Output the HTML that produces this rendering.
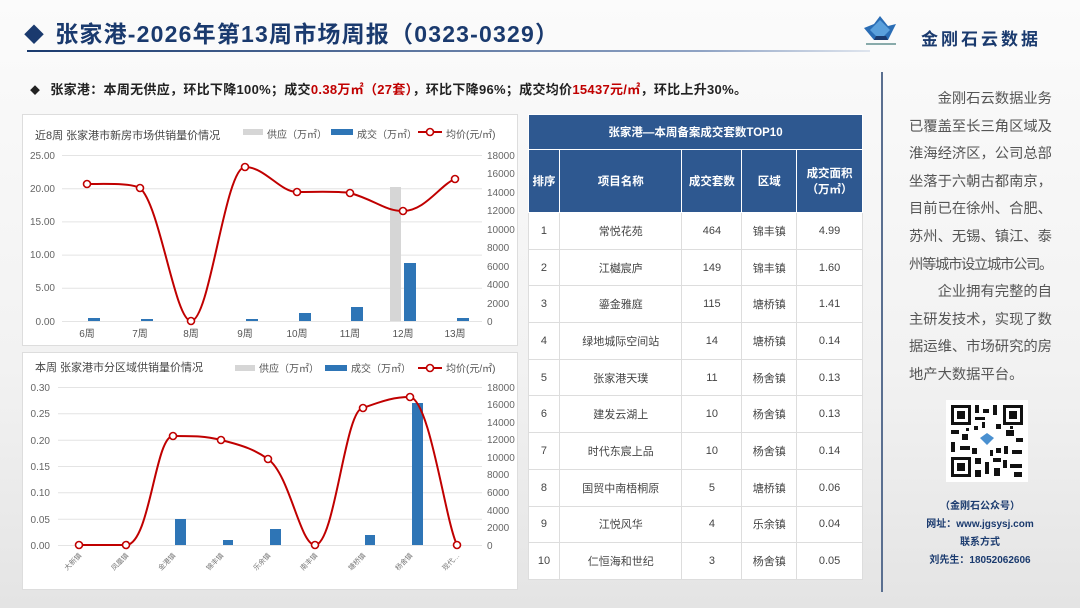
<!DOCTYPE html>
<html><head><meta charset="utf-8"><style>
*{margin:0;padding:0;box-sizing:border-box}
body{width:1080px;height:608px;overflow:hidden;font-family:"Liberation Sans","Noto Sans CJK SC",sans-serif;background:linear-gradient(#fbfbfb,#f2f2f2 60%,#e4e4e4);position:relative}
.abs{position:absolute}
.title{left:24px;top:15px;font-size:23px;color:#1a3a6e;font-weight:bold;letter-spacing:1.2px;white-space:nowrap}
.title span{font-size:20px;margin-right:10px}
.hr{left:27px;top:50px;width:843px;height:2px;background:linear-gradient(90deg,#1a3a6e,#8fa3c4 80%,#dfe5ee)}
.sum{left:30px;top:79px;font-size:13px;color:#222;font-weight:bold;white-space:nowrap;letter-spacing:0.3px}
.sum .r{color:#c00000}
table{border-collapse:collapse;position:absolute;left:528px;top:114px;width:335px;font-size:11px;color:#444}
td{border:1px solid #ddd;text-align:center;background:#fff;height:36.7px}
tr.h td{background:#2e5890;color:#fff;font-weight:bold;border-color:#fff;font-size:11.5px}
.side{left:909px;top:86px;width:170px;font-size:14.3px;line-height:27.6px;color:#555;white-space:nowrap}
.contact{left:900px;top:498px;width:160px;text-align:center;font-size:10px;color:#1a3a6e;font-weight:bold;line-height:18px}
</style></head><body>
<div class="abs title"><span>◆</span>张家港-2026年第13周市场周报（0323-0329）</div>
<div class="abs hr"></div>
<div class="abs sum"><span style="font-size:10px;margin-right:10px">◆</span>张家港：本周无供应，环比下降100%；成交<span class="r">0.38万㎡（27套）</span>，环比下降96%；成交均价<span class="r">15437元/㎡</span>，环比上升30%。</div>

<svg class="abs" style="left:862px;top:14px" width="36" height="34" viewBox="0 0 36 34"><polygon points="2,14 12,10 18,2 26,12 34,10 26,26 12,26" fill="#2a6db5"/><polygon points="8,16 18,6 28,16 18,26" fill="#5aa0dc"/><polygon points="12,26 26,26 24,22 14,22" fill="#1a3a6e"/><rect x="4" y="29" width="30" height="2" fill="#8aa"/></svg>
<div class="abs" style="left:921px;top:25px;font-size:17px;font-weight:bold;color:#1a3a6e;letter-spacing:3px">金刚石云数据</div>
<div class="abs" style="left:881px;top:72px;width:2px;height:520px;background:#5a6f90"></div>

<div class="abs side">　　金刚石云数据业务<br>已覆盖至长三角区域及<br>淮海经济区，公司总部<br>坐落于六朝古都南京，<br>目前已在徐州、合肥、<br>苏州、无锡、镇江、泰<br><span style="letter-spacing:-1.3px">州等城市设立城市公司。</span><br>　　企业拥有完整的自<br>主研发技术，实现了数<br>据运维、市场研究的房<br>地产大数据平台。</div>

<svg class="abs" style="left:946px;top:400px" width="82" height="82" viewBox="0 0 82 82"><rect width="82" height="82" fill="#fff"/>
<g fill="#111"><rect x="5" y="5" width="20" height="20"/><rect x="57" y="5" width="20" height="20"/><rect x="5" y="57" width="20" height="20"/></g>
<g fill="#fff"><rect x="8" y="8" width="14" height="14"/><rect x="60" y="8" width="14" height="14"/><rect x="8" y="60" width="14" height="14"/></g>
<g fill="#111"><rect x="11" y="11" width="8" height="8"/><rect x="63" y="11" width="8" height="8"/><rect x="11" y="63" width="8" height="8"/>
<rect x="29" y="5" width="4" height="8"/><rect x="37" y="9" width="6" height="4"/><rect x="47" y="5" width="4" height="10"/><rect x="29" y="17" width="10" height="3"/><rect x="5" y="30" width="8" height="4"/><rect x="16" y="34" width="6" height="6"/><rect x="5" y="42" width="4" height="10"/><rect x="14" y="46" width="10" height="4"/><rect x="60" y="30" width="8" height="6"/><rect x="70" y="38" width="7" height="4"/><rect x="58" y="46" width="4" height="8"/><rect x="66" y="50" width="10" height="4"/><rect x="29" y="58" width="6" height="6"/><rect x="39" y="62" width="4" height="12"/><rect x="47" y="58" width="8" height="4"/><rect x="57" y="60" width="4" height="8"/><rect x="64" y="64" width="12" height="4"/><rect x="48" y="68" width="6" height="8"/><rect x="29" y="70" width="6" height="7"/><rect x="68" y="72" width="8" height="5"/><rect x="28" y="26" width="4" height="4"/><rect x="50" y="24" width="5" height="5"/><rect x="26" y="48" width="5" height="6"/><rect x="50" y="48" width="5" height="5"/><rect x="36" y="22" width="3" height="6"/><rect x="44" y="50" width="3" height="6"/><rect x="20" y="28" width="3" height="3"/><rect x="64" y="26" width="3" height="3"/></g>
<rect x="32" y="30" width="18" height="18" fill="#fff"/><polygon points="34,38 41,33 48,38 41,45" fill="#4a90d0"/></svg>
<div class="abs contact">（金刚石公众号）<br>网址：www.jgsysj.com<br>联系方式<br>刘先生：18052062606</div>

<svg class="abs" style="left:22px;top:114px" width="496" height="232" viewBox="22 114 496 232" font-family="Liberation Sans,Noto Sans CJK SC,sans-serif">
<rect x="22.5" y="114.5" width="495" height="231" fill="#fff" stroke="#ddd"/>
<text x="35" y="139" font-size="11" fill="#444">近8周  张家港市新房市场供销量价情况</text>
<rect x="243" y="129" width="20" height="6" fill="#d6d6d6"/><text x="267" y="138" font-size="10" fill="#555">供应（万㎡）</text>
<rect x="331" y="129" width="22" height="6" fill="#2e75b6"/><text x="357" y="138" font-size="10" fill="#555">成交（万㎡）</text>
<line x1="418" y1="132" x2="442" y2="132" stroke="#c00000" stroke-width="2"/><circle cx="430" cy="132" r="3.5" fill="#fff" stroke="#c00000" stroke-width="1.6"/><text x="446" y="138" font-size="10" fill="#555">均价(元/㎡)</text>
<g stroke="#e4e4e4"><line x1="62" x2="482" y1="155.5" y2="155.5"/><line x1="62" x2="482" y1="188.7" y2="188.7"/><line x1="62" x2="482" y1="221.9" y2="221.9"/><line x1="62" x2="482" y1="255.1" y2="255.1"/><line x1="62" x2="482" y1="288.3" y2="288.3"/><line x1="62" x2="482" y1="321.5" y2="321.5"/></g>
<g font-size="10" fill="#666" text-anchor="end"><text x="55" y="159">25.00</text><text x="55" y="192">20.00</text><text x="55" y="225">15.00</text><text x="55" y="258">10.00</text><text x="55" y="291">5.00</text><text x="55" y="325">0.00</text></g>
<g font-size="10" fill="#666" text-anchor="start"><text x="487" y="159">18000</text><text x="487" y="177">16000</text><text x="487" y="196">14000</text><text x="487" y="214">12000</text><text x="487" y="233">10000</text><text x="487" y="251">8000</text><text x="487" y="270">6000</text><text x="487" y="288">4000</text><text x="487" y="307">2000</text><text x="487" y="325">0</text></g>
<rect x="390" y="187" width="11" height="134" fill="#d6d6d6"/>
<g fill="#2e75b6"><rect x="88" y="318" width="12" height="3"/><rect x="141" y="319" width="12" height="2"/><rect x="246" y="319" width="12" height="2"/><rect x="299" y="313" width="12" height="8"/><rect x="351" y="307" width="12" height="14"/><rect x="404" y="263" width="12" height="58"/><rect x="457" y="318" width="12" height="3"/></g>
<path d="M87,184 C110,184 130,183 140,188 C160,205 175,321 191,321 C210,321 225,167 245,167 C265,167 280,192 297,192 C320,192 335,191 350,193 C375,200 385,211 403,211 C425,211 440,185 455,179" fill="none" stroke="#c00000" stroke-width="2"/>
<g fill="#fff" stroke="#c00000" stroke-width="1.6"><circle cx="87" cy="184" r="3.5"/><circle cx="140" cy="188" r="3.5"/><circle cx="191" cy="321" r="3.5"/><circle cx="245" cy="167" r="3.5"/><circle cx="297" cy="192" r="3.5"/><circle cx="350" cy="193" r="3.5"/><circle cx="403" cy="211" r="3.5"/><circle cx="455" cy="179" r="3.5"/></g>
<g font-size="10" fill="#555" text-anchor="middle"><text x="87" y="337">6周</text><text x="140" y="337">7周</text><text x="191" y="337">8周</text><text x="245" y="337">9周</text><text x="297" y="337">10周</text><text x="350" y="337">11周</text><text x="403" y="337">12周</text><text x="455" y="337">13周</text></g>
</svg>

<svg class="abs" style="left:22px;top:352px" width="496" height="240" viewBox="22 352 496 240" font-family="Liberation Sans,Noto Sans CJK SC,sans-serif">
<rect x="22.5" y="352.5" width="495" height="237" fill="#fff" stroke="#ddd"/>
<text x="35" y="371" font-size="11" fill="#444">本周  张家港市分区域供销量价情况</text>
<rect x="235" y="365" width="20" height="6" fill="#d6d6d6"/><text x="259" y="372" font-size="10" fill="#555">供应（万㎡）</text>
<rect x="325" y="365" width="22" height="6" fill="#2e75b6"/><text x="351" y="372" font-size="10" fill="#555">成交（万㎡）</text>
<line x1="418" y1="368" x2="442" y2="368" stroke="#c00000" stroke-width="2"/><circle cx="430" cy="368" r="3.5" fill="#fff" stroke="#c00000" stroke-width="1.6"/><text x="446" y="372" font-size="10" fill="#555">均价(元/㎡)</text>
<g stroke="#e4e4e4"><line x1="58" x2="482" y1="387.5" y2="387.5"/><line x1="58" x2="482" y1="413.8" y2="413.8"/><line x1="58" x2="482" y1="440.2" y2="440.2"/><line x1="58" x2="482" y1="466.5" y2="466.5"/><line x1="58" x2="482" y1="492.8" y2="492.8"/><line x1="58" x2="482" y1="519.2" y2="519.2"/><line x1="58" x2="482" y1="545.5" y2="545.5"/></g>
<g font-size="10" fill="#666" text-anchor="end"><text x="50" y="391">0.30</text><text x="50" y="417">0.25</text><text x="50" y="444">0.20</text><text x="50" y="470">0.15</text><text x="50" y="496">0.10</text><text x="50" y="523">0.05</text><text x="50" y="549">0.00</text></g>
<g font-size="10" fill="#666"><text x="487" y="391">18000</text><text x="487" y="408">16000</text><text x="487" y="426">14000</text><text x="487" y="443">12000</text><text x="487" y="461">10000</text><text x="487" y="478">8000</text><text x="487" y="496">6000</text><text x="487" y="514">4000</text><text x="487" y="531">2000</text><text x="487" y="549">0</text></g>
<g fill="#2e75b6"><rect x="175" y="519" width="11" height="26"/><rect x="223" y="540" width="10" height="5"/><rect x="270" y="529" width="11" height="16"/><rect x="365" y="535" width="10" height="10"/><rect x="412" y="403" width="11" height="142"/></g>
<path d="M79,545 L126,545 C150,545 155,436 173,436 C195,436 205,436 221,440 C245,446 255,450 268,459 C290,475 300,545 315,545 C335,545 345,408 363,408 C385,400 395,397 410,397 C430,400 445,520 457,545" fill="none" stroke="#c00000" stroke-width="2"/>
<g fill="#fff" stroke="#c00000" stroke-width="1.6"><circle cx="79" cy="545" r="3.5"/><circle cx="126" cy="545" r="3.5"/><circle cx="173" cy="436" r="3.5"/><circle cx="221" cy="440" r="3.5"/><circle cx="268" cy="459" r="3.5"/><circle cx="315" cy="545" r="3.5"/><circle cx="363" cy="408" r="3.5"/><circle cx="410" cy="397" r="3.5"/><circle cx="457" cy="545" r="3.5"/></g>
<g font-size="7" fill="#777" text-anchor="end"><text transform="translate(82,556) rotate(-45)">大新镇</text><text transform="translate(129,556) rotate(-45)">凤凰镇</text><text transform="translate(176,556) rotate(-45)">金港镇</text><text transform="translate(224,556) rotate(-45)">锦丰镇</text><text transform="translate(271,556) rotate(-45)">乐余镇</text><text transform="translate(318,556) rotate(-45)">南丰镇</text><text transform="translate(366,556) rotate(-45)">塘桥镇</text><text transform="translate(413,556) rotate(-45)">杨舍镇</text><text transform="translate(460,556) rotate(-45)">现代…</text></g>
</svg>

<table>
<colgroup><col style="width:31px"><col style="width:123px"><col style="width:60px"><col style="width:55px"><col style="width:66px"></colgroup>
<tr class="h"><td colspan="5" style="height:35px">张家港—本周备案成交套数TOP10</td></tr>
<tr class="h"><td style="height:63px">排序</td><td>项目名称</td><td>成交套数</td><td>区域</td><td>成交面积<br>（万㎡）</td></tr>
<tr><td>1</td><td>常悦花苑</td><td>464</td><td>锦丰镇</td><td>4.99</td></tr>
<tr><td>2</td><td>江樾宸庐</td><td>149</td><td>锦丰镇</td><td>1.60</td></tr>
<tr><td>3</td><td>鎏金雅庭</td><td>115</td><td>塘桥镇</td><td>1.41</td></tr>
<tr><td>4</td><td>绿地城际空间站</td><td>14</td><td>塘桥镇</td><td>0.14</td></tr>
<tr><td>5</td><td>张家港天璞</td><td>11</td><td>杨舍镇</td><td>0.13</td></tr>
<tr><td>6</td><td>建发云湖上</td><td>10</td><td>杨舍镇</td><td>0.13</td></tr>
<tr><td>7</td><td>时代东宸上品</td><td>10</td><td>杨舍镇</td><td>0.14</td></tr>
<tr><td>8</td><td>国贸中南梧桐原</td><td>5</td><td>塘桥镇</td><td>0.06</td></tr>
<tr><td>9</td><td>江悦风华</td><td>4</td><td>乐余镇</td><td>0.04</td></tr>
<tr><td>10</td><td>仁恒海和世纪</td><td>3</td><td>杨舍镇</td><td>0.05</td></tr>
</table>
</body></html>
